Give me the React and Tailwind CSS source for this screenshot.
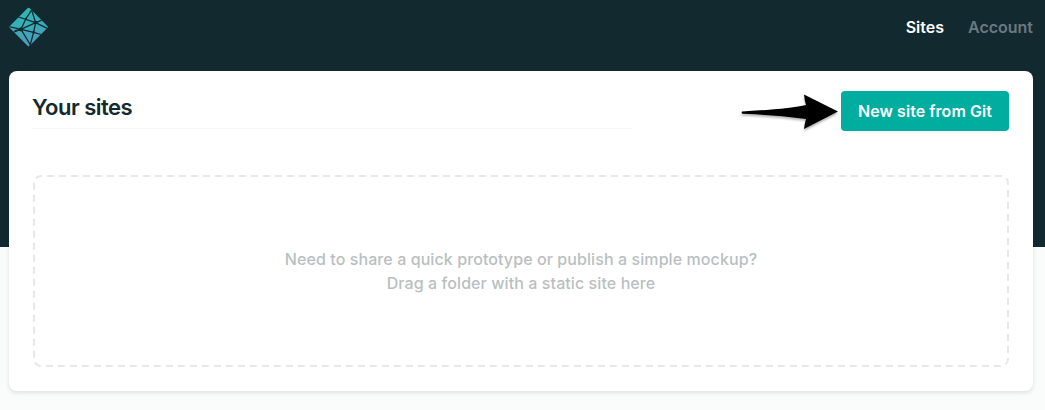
function Logo() {
  return (
    <svg viewBox="0.4 0 40 40" className="h-10 w-10" aria-label="Netlify">
      <defs>
        <linearGradient id="logo-fill" x1="0.4" y1="0" x2="0.6" y2="1">
          <stop offset="0" stopColor="#24bdb3" />
          <stop offset="1" stopColor="#5298bd" />
        </linearGradient>
        <clipPath id="logo-clip">
          <rect x="6" y="6" width="28" height="28" rx="1.2" transform="rotate(45 20 20)" />
        </clipPath>
      </defs>
      <g clipPath="url(#logo-clip)">
        <rect width="40" height="40" fill="url(#logo-fill)" />
        <g stroke="#12292f" strokeWidth="1.3" fill="none">
          <path d="M0 19.5L12.4 22.3L27 15.6L40 10.5" />
          <path d="M8.5 9.5L27 15.6L40 22" />
          <path d="M25 0L17.3 11.8L12.4 22.3L3 26" />
          <path d="M23 3L27 15.6L25 25.3L20.5 42" />
          <path d="M12.4 22.3L25 25.3L34 28" />
          <path d="M12.4 22.3L22.5 39" />
          <path d="M12.4 22.3L6 24" />
        </g>
        <circle cx="27" cy="15.6" r="1.8" fill="#12292f" />
        <circle cx="12.4" cy="22.3" r="2.1" fill="#12292f" />
        <circle cx="25" cy="25.3" r="1.3" fill="#12292f" />
        <circle cx="17.3" cy="11.8" r="1.1" fill="#12292f" />
      </g>
    </svg>
  );
}

function Arrow() {
  return (
    <svg viewBox="1 0 100 42" className="h-[42px] w-[100px] drop-shadow-[0_2px_1px_rgba(0,0,0,0.3)]" aria-hidden="true">
      <path d="M2 21.5Q1 22.6 2.5 23.8Q35 25 66 29Q64.5 34 64 39L98 21.5L64 4.5Q64.5 10 66 15Q50 19 2 21.5Z" fill="#000" />
    </svg>
  );
}

export default function App() {
  return (
    <div className="h-[410px] bg-[#fafcfb] bg-[linear-gradient(#12292f_247px,transparent_247px)] font-[Inter,sans-serif] text-base font-medium">
      <header className="flex h-[71px] items-start justify-between pl-[9px] pr-3 pt-[7px]">
        <Logo />
        <nav className="flex gap-6 pt-2 font-semibold leading-6">
          <a className="text-white">Sites</a>
          <a className="text-[#6b787f]">Account</a>
        </nav>
      </header>
      <main className="ml-[9px] mr-3 h-80 rounded-lg bg-white px-6 pt-5 shadow-[0_2px_4px_rgba(14,30,37,0.12)]">
        <div className="flex h-[84px] items-start justify-between">
          <h1 className="-ml-px w-[600px] border-b border-[#f7f9f9] pb-[5px] text-[22px] font-semibold leading-8 tracking-[-0.5px] text-[#12292f]">Your sites</h1>
          <div className="flex h-10 items-center">
            <Arrow />
            <button className="h-10 w-[168px] rounded bg-[#00ad9f] font-semibold tracking-[0.05px] text-white">New site from Git</button>
          </div>
        </div>
        <section className="relative flex h-48 items-center justify-center text-center leading-6 tracking-[0.085px] text-[#b9bfc1]">
          <svg viewBox="0 0 976 192" className="absolute inset-0 h-full w-full" aria-hidden="true">
            <rect x="1" y="1" width="974" height="190" rx="7" fill="none" stroke="#e6e8e9" strokeWidth="2" strokeDasharray="7 5" strokeDashoffset="6" />
          </svg>
          <p>
            Need to share a quick prototype or publish a simple mockup?
            <br />
            Drag a folder with a static site here
          </p>
        </section>
      </main>
    </div>
  );
}
